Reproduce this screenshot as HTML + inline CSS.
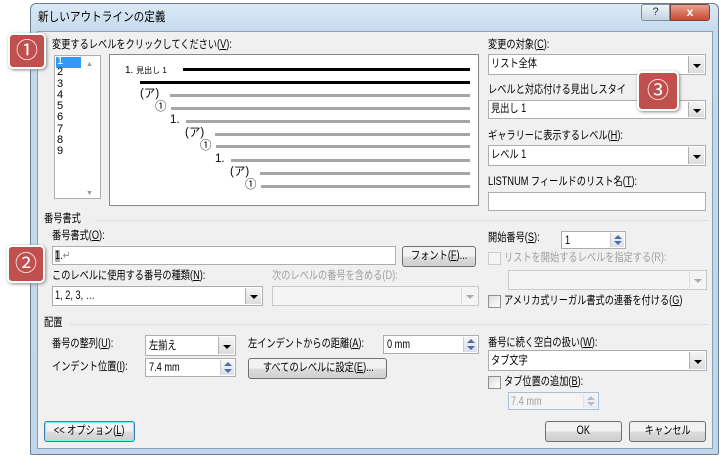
<!DOCTYPE html>
<html><head><meta charset="utf-8"><style>
*{box-sizing:border-box;margin:0;padding:0}
body{width:725px;height:458px;background:#fff;position:relative;overflow:hidden;font-family:"Liberation Sans","Noto Sans CJK JP",sans-serif;font-size:11.5px;color:#000}
.a{position:absolute;white-space:nowrap;line-height:13px;transform:scaleX(.8);transform-origin:0 0}
.n{transform:none}
.win{position:absolute;left:30px;top:3px;width:689px;height:452px;border:1px solid #6d7d91;border-radius:6px 6px 2px 2px;background:linear-gradient(#dbe9f5,#c4d9ec 30px,#c0d6ea);}
.body{position:absolute;left:37px;top:31px;width:676px;height:418px;background:#f0f0f0;border:1px solid #8aa0b8}
.box{position:absolute;background:#fff;border:1px solid #abadb3}
.dis{background:#f4f4f4;border-color:#c9c9c9}
.dd{position:absolute;right:1px;top:1px;bottom:1px;width:16px;background:linear-gradient(#f4f4f4,#dcdcdc);border-left:1px solid #b0b0b0}
.dd:after{content:"";position:absolute;left:4px;top:50%;margin-top:-1px;border:4px solid transparent;border-top:4px solid #000;border-bottom:0}
.dis .dd:after{border-top-color:#aaa}
.sp{position:absolute;right:1px;top:1px;bottom:1px;width:14px;background:linear-gradient(#f6f6f6,#dde);border-left:1px solid #ccc}
.sp:before{content:"";position:absolute;left:3px;top:2px;border:4px solid transparent;border-bottom:4px solid #4a6fa5;border-top:0}
.sp:after{content:"";position:absolute;left:3px;bottom:2px;border:4px solid transparent;border-top:4px solid #4a6fa5;border-bottom:0}
.btn{position:absolute;border:1px solid #707070;border-radius:3px;background:linear-gradient(#f2f2f2 50%,#dddddd 50%,#cfcfcf);text-align:center;line-height:19px;white-space:nowrap}
.btn span{display:inline-block;transform:scaleX(.8)}
.cb{position:absolute;width:13px;height:13px;border:1px solid #8e8f8f;background:linear-gradient(135deg,#dcdcdc,#fff)}
.g{color:#a0a0a0}
.ln{position:absolute;height:3px;background:#a6a6a6}
.bk{position:absolute;height:3px;background:#000}
.badge{position:absolute;background:#c0504d;border-radius:5px;box-shadow:1px 1px 3px #888;border:2px solid #fff;color:#fff;font-size:22px;text-align:center}
.hr{position:absolute;height:1px;background:#d5dfe5}
</style></head><body>
<div class="win"></div>
<div class="a" style="left:38px;top:11px;font-size:12.5px;transform:scaleX(.85)">新しいアウトラインの定義</div>
<div style="position:absolute;left:641px;top:4px;width:29px;height:17px;border:1px solid #7d8ea2;border-radius:3px 0 0 3px;background:linear-gradient(#eef3f9,#c5d3e2);text-align:center;font-size:11px;line-height:15px;color:#333">?</div>
<div style="position:absolute;left:670px;top:4px;width:40px;height:17px;border:1px solid #7d4040;border-radius:0 3px 3px 0;background:linear-gradient(#e8a090,#c84a30);text-align:center;color:#fff;font-weight:bold;font-size:12px;line-height:15px">x</div>
<div class="body"></div>

<div class="a" style="left:52px;top:39px">変更するレベルをクリックしてください(<u>V</u>):</div>
<div class="box" style="left:54px;top:55px;width:47px;height:144px"></div>
<div style="position:absolute;left:56px;top:57px;width:25px;height:11px;background:#3399ff"></div>
<div class="a n" style="left:57px;top:56px;line-height:11.3px;font-size:11px"><span style="color:#fff">1</span><br>2<br>3<br>4<br>5<br>6<br>7<br>8<br>9</div>
<div class="a n" style="left:86px;top:58px;font-size:7px;color:#999">▲</div>
<div class="a n" style="left:86px;top:187px;font-size:7px;color:#999">▼</div>
<div class="box" style="left:109px;top:54px;width:370px;height:152px;border-color:#888"></div>
<div class="a n" style="left:125px;top:64px;font-size:10px">1. <span style="font-size:8px">見出し 1</span></div>
<div class="bk" style="left:183px;top:68px;width:287px"></div>
<div class="bk" style="left:140px;top:81px;width:330px"></div>
<div class="a n" style="left:140px;top:88px">(ア)</div><div class="ln" style="left:170px;top:94px;width:300px"></div>
<div class="a n" style="left:155px;top:101px">①</div><div class="ln" style="left:171px;top:107px;width:299px"></div>
<div class="a n" style="left:170px;top:114px">1.</div><div class="ln" style="left:186px;top:120px;width:284px"></div>
<div class="a n" style="left:185px;top:127px">(ア)</div><div class="ln" style="left:215px;top:133px;width:255px"></div>
<div class="a n" style="left:200px;top:140px">①</div><div class="ln" style="left:216px;top:145px;width:254px"></div>
<div class="a n" style="left:215px;top:153px">1.</div><div class="ln" style="left:231px;top:159px;width:239px"></div>
<div class="a n" style="left:230px;top:166px">(ア)</div><div class="ln" style="left:260px;top:172px;width:210px"></div>
<div class="a n" style="left:245px;top:179px">①</div><div class="ln" style="left:261px;top:185px;width:209px"></div>

<div class="a" style="left:488px;top:39px">変更の対象(<u>C</u>):</div>
<div class="box" style="left:488px;top:54px;width:218px;height:21px"><div class="a" style="left:2px;top:3px">リスト全体</div><div class="dd"></div></div>
<div class="a" style="left:488px;top:84px">レベルと対応付ける見出しスタイ</div>
<div class="box" style="left:488px;top:100px;width:218px;height:19px"><div class="a" style="left:2px;top:2px">見出し 1</div><div class="dd"></div></div>
<div class="a" style="left:488px;top:130px">ギャラリーに表示するレベル(<u>H</u>):</div>
<div class="box" style="left:488px;top:145px;width:218px;height:21px"><div class="a" style="left:2px;top:3px">レベル 1</div><div class="dd"></div></div>
<div class="a" style="left:488px;top:176px">LISTNUM フィールドのリスト名(<u>T</u>):</div>
<div class="box" style="left:488px;top:192px;width:218px;height:19px"></div>

<div class="a" style="left:44px;top:213px">番号書式</div><div class="hr" style="left:95px;top:220px;width:613px"></div>
<div class="a" style="left:52px;top:230px">番号書式(<u>O</u>):</div>
<div class="box" style="left:52px;top:246px;width:344px;height:19px"><div class="a" style="left:2px;top:3px"><span style="background:#aaa">1</span>.<span style="color:#888">↵</span></div></div>
<div class="btn" style="left:402px;top:246px;width:74px;height:21px"><span>フォント(<u>F</u>)...</span></div>
<div class="a" style="left:488px;top:232px">開始番号(<u>S</u>):</div>
<div class="box" style="left:561px;top:231px;width:65px;height:18px"><div class="a" style="left:3px;top:3px">1</div><div class="sp"></div></div>
<div class="cb" style="left:488px;top:252px;border-color:#ccc;background:#f4f4f4"></div>
<div class="a g" style="left:504px;top:252px">リストを開始するレベルを指定する(R):</div>
<div class="box dis" style="left:508px;top:270px;width:199px;height:20px"><div class="dd" style="background:#f4f4f4;border-left-color:#ddd"></div></div>
<div class="cb" style="left:488px;top:295px"></div>
<div class="a" style="left:504px;top:295px">アメリカ式リーガル書式の連番を付ける(<u>G</u>)</div>

<div class="a" style="left:52px;top:270px">このレベルに使用する番号の種類(<u>N</u>):</div>
<div class="box" style="left:52px;top:286px;width:211px;height:20px"><div class="a" style="left:2px;top:3px">1, 2, 3, …</div><div class="dd"></div></div>
<div class="a g" style="left:272px;top:270px">次のレベルの番号を含める(D):</div>
<div class="box dis" style="left:272px;top:286px;width:207px;height:20px"><div class="dd" style="background:#f4f4f4;border-left-color:#ddd"></div></div>

<div class="a" style="left:44px;top:317px">配置</div><div class="hr" style="left:70px;top:324px;width:638px"></div>
<div class="a" style="left:52px;top:338px">番号の整列(<u>U</u>):</div>
<div class="box" style="left:145px;top:335px;width:91px;height:21px"><div class="a" style="left:3px;top:4px">左揃え</div><div class="dd"></div></div>
<div class="a" style="left:248px;top:338px">左インデントからの距離(<u>A</u>):</div>
<div class="box" style="left:383px;top:335px;width:96px;height:19px"><div class="a" style="left:3px;top:3px">0 mm</div><div class="sp"></div></div>
<div class="a" style="left:52px;top:361px">インデント位置(<u>I</u>):</div>
<div class="box" style="left:145px;top:358px;width:91px;height:19px"><div class="a" style="left:3px;top:3px">7.4 mm</div><div class="sp"></div></div>
<div class="btn" style="left:248px;top:358px;width:139px;height:21px"><span>すべてのレベルに設定(<u>E</u>)...</span></div>
<div class="a" style="left:488px;top:337px">番号に続く空白の扱い(<u>W</u>):</div>
<div class="box" style="left:488px;top:350px;width:219px;height:21px"><div class="a" style="left:2px;top:4px">タブ文字</div><div class="dd"></div></div>
<div class="cb" style="left:488px;top:376px"></div>
<div class="a" style="left:504px;top:376px">タブ位置の追加(<u>B</u>):</div>
<div class="box dis" style="left:508px;top:392px;width:91px;height:18px;border-color:#a9bfd6"><div class="a g" style="left:2px;top:3px">7.4 mm</div><div class="sp" style="opacity:.4"></div></div>

<div class="btn" style="left:44px;top:421px;width:91px;height:21px;border-color:#3c7fb1;box-shadow:inset 0 0 0 1px #6fd"><span>&lt;&lt; オプション(<u>L</u>)</span></div>
<div class="btn" style="left:545px;top:421px;width:77px;height:21px"><span>OK</span></div>
<div class="btn" style="left:629px;top:421px;width:77px;height:21px"><span>キャンセル</span></div>

<div class="badge" style="left:8px;top:33px;width:38px;height:36px;line-height:32px">①</div>
<div class="badge" style="left:7px;top:245px;width:38px;height:38px;line-height:34px">②</div>
<div class="badge" style="left:637px;top:71px;width:42px;height:40px;line-height:36px">③</div>
</body></html>
